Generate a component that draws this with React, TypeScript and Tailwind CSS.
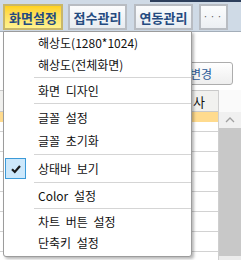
import React from "react";

const font = { fontFamily: '"Noto Sans CJK KR", "Noto Sans", sans-serif' };

function Tab({ label, active }: { label: string; active?: boolean }) {
  return (
    <div
      className={
        "flex h-[26px] items-center justify-center border-2 text-[13px] font-bold leading-none text-[#244a80] " +
        (active
          ? "w-[60px] border-[#c8b66a] bg-gradient-to-b from-[#ffd21a] to-[#fff38e]"
          : "w-[59px] border-[#b8bcc2] bg-gradient-to-b from-[#fbfcfd] to-[#e8ecf1]")
      }
    >
      {label}
    </div>
  );
}

function Item({ label, h }: { label: string; h: string }) {
  return (
    <div className={"flex items-center pl-[34px] text-[12px] leading-none text-[#111] [word-spacing:3px] " + h}>
      {label}
    </div>
  );
}

function Sep() {
  return (
    <div className="flex h-[5px] items-center pl-[30px]">
      <div className="h-px w-full bg-[#d5d5d5]" />
    </div>
  );
}

export default function App() {
  return (
    <div className="relative h-[260px] w-[241px] overflow-hidden bg-white" style={font}>
      {/* top bar */}
      <div className="relative flex h-[32px] items-start gap-[5px] border-b border-[#a4aeb9] bg-[#cfdae6] pl-[3px] pt-[4px]">
        <div className="absolute right-0 top-0 h-[2px] w-[91px] bg-[#2d3f5c]" />
        <Tab label="화면설정" active />
        <Tab label="접수관리" />
        <div className="ml-[2px]">
          <Tab label="연동관리" />
        </div>
        <div className="ml-[1px] flex h-[26px] w-[29px] items-start justify-center border-2 border-[#b8bcc2] bg-gradient-to-b from-[#fbfcfd] to-[#eceff3] pt-[6px] text-[9px] leading-none tracking-[2px] text-[#555]">
          ···
        </div>
      </div>

      {/* content behind */}
      <div className="flex flex-col">
        <div className="h-[30px]" />
        <div className="flex justify-end pr-[8px]">
          <div className="flex h-[23px] w-[75px] items-center justify-end rounded-[3px] border border-[#adadad] bg-gradient-to-b from-white to-[#eeeeee] pr-[20px] text-[12px] leading-none text-[#2c5a98]">
            변경
          </div>
        </div>
        <div className="mt-[5px] flex">
          <div className="flex w-[219px] flex-col border-r border-[#cfcfcf]">
            <div className="flex h-[22px] items-center justify-end border-y border-[#c9c9c9] bg-[#f1f1ef] pr-[13px] text-[13px] leading-none text-[#111]">
              검사
            </div>
            <div className="h-[10px] bg-[#ffdb8e]" />
            <div className="h-[10px] border-b border-[#d2d2d2]" />
            <div className="h-[20px] border-b border-[#d2d2d2]" />
            <div className="h-[20px] border-b border-[#d2d2d2]" />
            <div className="h-[20px] border-b border-[#d2d2d2]" />
            <div className="h-[20px] border-b border-[#d2d2d2]" />
            <div className="h-[20px] border-b border-[#d2d2d2]" />
            <div className="h-[20px] border-b border-[#d2d2d2]" />
            <div className="h-[20px]" />
          </div>
          <div className="flex flex-1 flex-col">
            <div className="h-[22px] bg-[#fafafa]" />
            <div className="flex h-[16px] items-center justify-center bg-[#f0f0f0]">
              <svg width="10" height="6" viewBox="0 0 10 6">
                <path d="M1 5 L5 1 L9 5" fill="none" stroke="#a0a0a0" strokeWidth="1.3" />
              </svg>
            </div>
            <div className="h-[128px] bg-[#c8c8c8]" />
            <div className="h-[20px] bg-[#ececec]" />
          </div>
        </div>
      </div>

      {/* dropdown menu */}
      <div className="absolute left-[3px] top-[31px] flex w-[189px] flex-col rounded-b-[3px] border border-[#9c9c9c] bg-white pb-[3px] shadow-[2px_2px_3px_rgba(0,0,0,0.28)]">
        <Item label="해상도(1280*1024)" h="h-[22px]" />
        <Item label="해상도(전체화면)" h="h-[21px]" />
        <Sep />
        <Item label="화면 디자인" h="h-[21px]" />
        <Sep />
        <Item label="글꼴 설정" h="h-[23px]" />
        <Item label="글꼴 초기화" h="h-[23px]" />
        <Sep />
        <div className="flex h-[23px] items-center pl-[1px] text-[12px] leading-none text-[#111] [word-spacing:3px]">
          <div className="flex h-[21px] w-[21px] items-center justify-center border border-[#3c9ad8] bg-[#cde8fb]">
            <svg width="12" height="12" viewBox="0 0 12 12">
              <path d="M2 6.2 L4.8 9 L10 3" fill="none" stroke="#1a1a1a" strokeWidth="2.2" />
            </svg>
          </div>
          <span className="ml-[12px]">상태바 보기</span>
        </div>
        <Sep />
        <Item label="Color 설정" h="h-[21px]" />
        <Sep />
        <Item label="차트 버튼 설정" h="h-[21px]" />
        <Item label="단축키 설정" h="h-[21px]" />
      </div>
    </div>
  );
}
